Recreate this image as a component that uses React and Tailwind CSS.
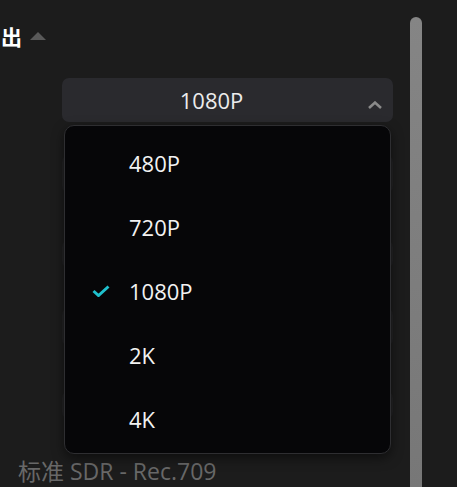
export default function App() {
  const items = ["480P", "720P", "1080P", "2K", "4K"];
  return (
    <div
      className="flex h-[487px] w-[457px] overflow-hidden bg-[#1c1c1c]"
      style={{ fontFamily: '"Open Sans", "Noto Sans CJK SC", sans-serif' }}
    >
      <div className="relative flex w-[410px] flex-col">
        {/* header */}
        <div className="mt-[24px] flex h-[24px] items-center pl-[1px]">
          <span
            className="text-[21px] font-bold leading-none text-white"
            style={{ fontFamily: '"Noto Sans CJK SC", sans-serif' }}
          >
            出
          </span>
          <svg width="16" height="8" viewBox="0 0 16 8" className="ml-[8px] mt-[-1px]">
            <polygon points="0,8 8,0 16,8" fill="#595959" />
          </svg>
        </div>

        {/* select */}
        <div className="relative ml-[62px] mt-[30px] w-[331px]">
          <div className="relative flex h-[44px] items-center justify-center rounded-[7px] bg-[#2a2a2e] pr-[32px]">
            <span className="text-[22px] leading-none text-[#ececec]">1080P</span>
            <svg
              width="16"
              height="8"
              viewBox="0 0 16 8"
              className="absolute right-[10px] top-[23px]"
            >
              <polyline
                points="2,7 8,1.6 14,7"
                fill="none"
                stroke="#8a8a8a"
                strokeWidth="2.6"
                strokeLinejoin="miter"
              />
            </svg>
          </div>

          {/* controls behind the menu */}
          <div className="flex flex-col">
            <div className="mt-[33px] h-[38px] rounded-[7px] bg-[#222224]" />
            <div className="mt-[47px] h-[28px] rounded-[7px] bg-[#222224]" />
            <div className="mt-[40px] h-[38px] rounded-[7px] bg-[#222224]" />
            <div className="mt-[45px] h-[28px] rounded-[7px] bg-[#222224]" />
          </div>

          {/* dropdown menu */}
          <div className="absolute left-[2px] top-[47px] z-10 flex h-[329px] w-[327px] flex-col rounded-[10px] border-[1.5px] border-[#2e2e31] bg-[#060608] pt-[5px] shadow-[0_4px_12px_rgba(0,0,0,0.5)]">
            {items.map((it) => (
              <div key={it} className="flex h-[64px] shrink-0 items-center pl-[27px]">
                <div className="flex w-[37px] items-center">
                  {it === "1080P" && (
                    <svg width="18" height="12" viewBox="0 0 18 12">
                      <polyline
                        points="1.5,6 6.5,10.5 16.5,1.5"
                        fill="none"
                        stroke="#1fc0cd"
                        strokeWidth="3"
                      />
                    </svg>
                  )}
                </div>
                <span className="text-[22px] leading-none text-[#f2f2f2]">{it}</span>
              </div>
            ))}
          </div>
        </div>

        {/* bottom label */}
        <div className="mt-auto pb-[1px] pl-[18px]">
          <span className="text-[23px] leading-none text-[#686868]">
            <span style={{ fontFamily: '"Noto Sans CJK SC", sans-serif' }}>标准</span> SDR - Rec.709
          </span>
        </div>
      </div>

      {/* scrollbar */}
      <div className="flex w-[12px] flex-col pt-[17px]">
        <div className="flex-1 rounded-t-full bg-gradient-to-b from-[#858585] to-[#777777]" />
      </div>
      <div className="flex-1" />
    </div>
  );
}
